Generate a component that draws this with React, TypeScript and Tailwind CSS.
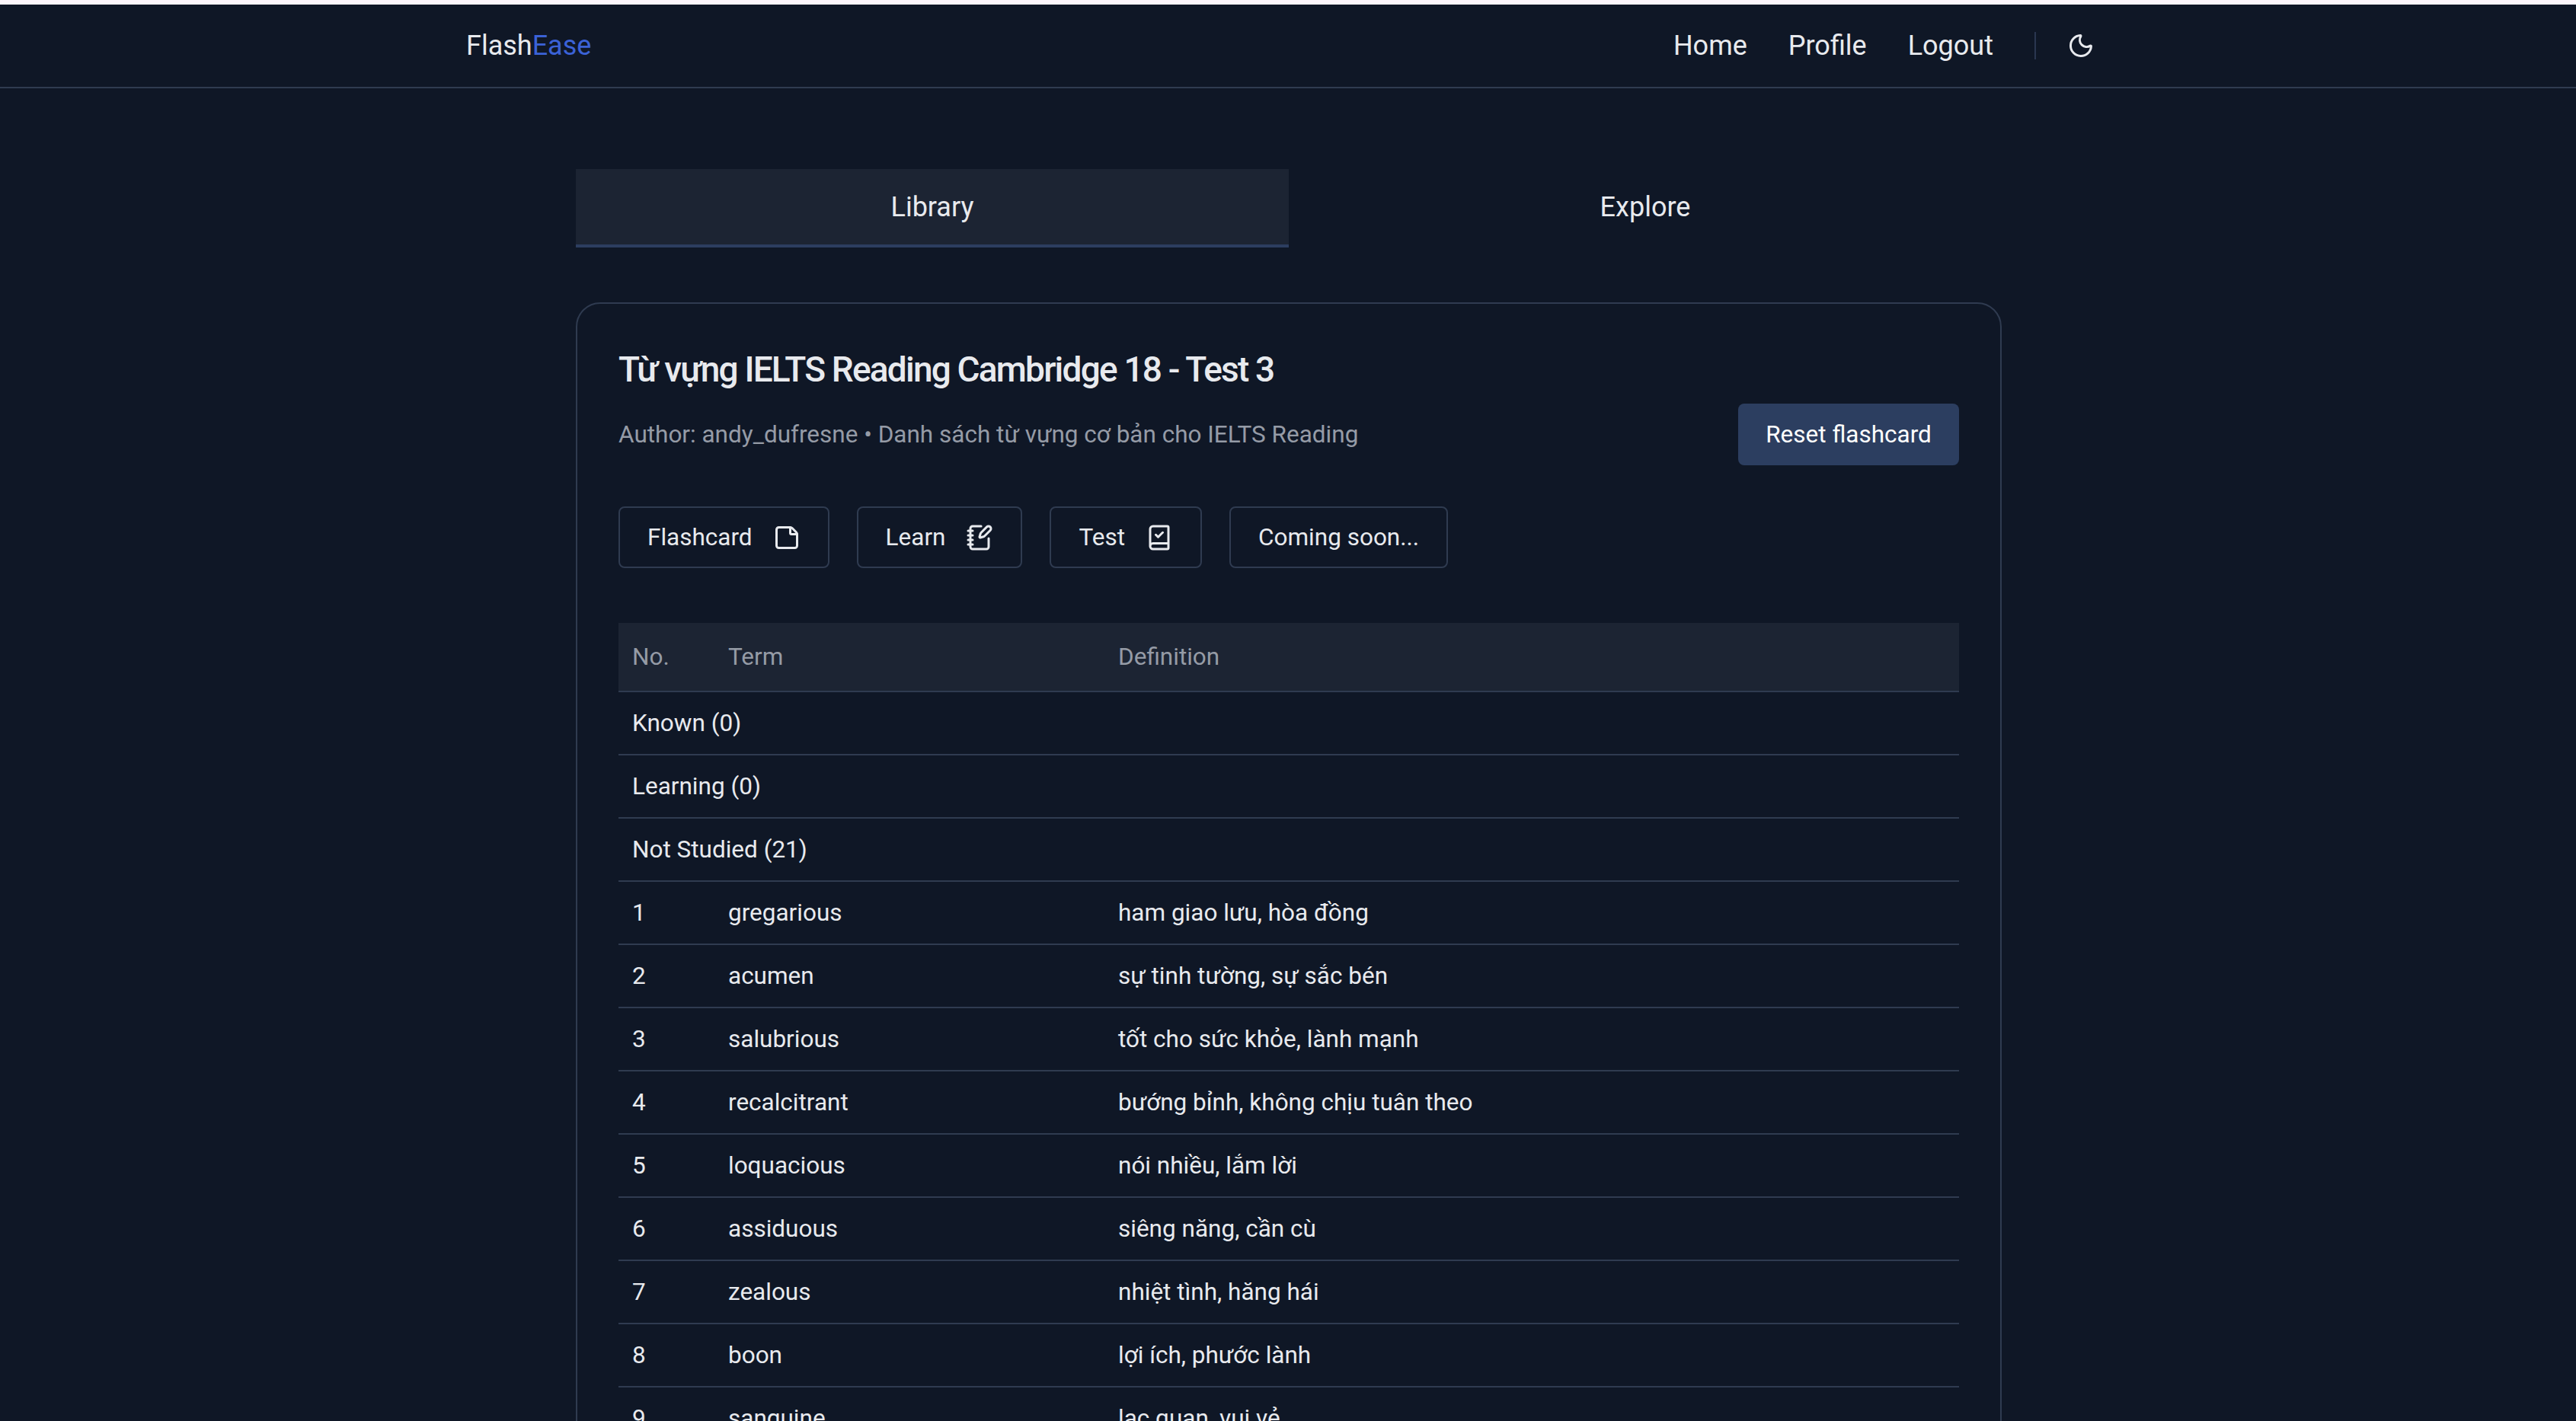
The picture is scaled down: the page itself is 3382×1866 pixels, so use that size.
import { Moon, StickyNote, NotebookPen, BookCheck } from 'lucide-react';

const words = [
  { term: 'gregarious', definition: 'ham giao lưu, hòa đồng' },
  { term: 'acumen', definition: 'sự tinh tường, sự sắc bén' },
  { term: 'salubrious', definition: 'tốt cho sức khỏe, lành mạnh' },
  { term: 'recalcitrant', definition: 'bướng bỉnh, không chịu tuân theo' },
  { term: 'loquacious', definition: 'nói nhiều, lắm lời' },
  { term: 'assiduous', definition: 'siêng năng, cần cù' },
  { term: 'zealous', definition: 'nhiệt tình, hăng hái' },
  { term: 'boon', definition: 'lợi ích, phước lành' },
  { term: 'sanguine', definition: 'lạc quan, vui vẻ' },
];

const groups = ['Known (0)', 'Learning (0)', 'Not Studied (21)'];

const modes = [
  { label: 'Flashcard', icon: StickyNote },
  { label: 'Learn', icon: NotebookPen },
  { label: 'Test', icon: BookCheck },
  { label: 'Coming soon...', icon: null },
];

export default function App() {
  return (
    <div className="h-screen overflow-hidden bg-[#0f1726] font-['Roboto',sans-serif] text-[#e8eaee]">
      <div className="h-[6px] bg-[#fdf6fb]" />
      <header className="h-[110px] border-b-2 border-[#2f3b50]">
        <div className="mx-auto flex h-full w-[2164px] items-center justify-between pl-[3px] pr-[23px]">
          <div className="text-[36px]">
            Flash<span className="text-[#3b62d6]">Ease</span>
          </div>
          <nav className="flex items-center text-[36px]">
            <a className="mr-[54px]">Home</a>
            <a className="mr-[54px]">Profile</a>
            <a>Logout</a>
            <div className="ml-[54px] h-[36px] w-[2px] bg-[#2a3650]" />
            <Moon className="ml-[41px] h-[36px] w-[36px]" strokeWidth={2} />
          </nav>
        </div>
      </header>

      <main className="ml-[756px] w-[1872px] pt-[106px]">
        <div className="grid grid-cols-2 text-[36px]">
          <div className="flex h-[103px] items-center justify-center border-b-4 border-[#2c3e60] bg-[#1c2433]">
            Library
          </div>
          <div className="flex h-[103px] items-center justify-center border-b-4 border-transparent">Explore</div>
        </div>

        <section className="mt-[72px] rounded-[32px] border-2 border-[#2f3b50] px-[54px] pb-[60px] pt-[54px]">
          <h1 className="text-[46px] font-medium leading-[64px] tracking-[-1.8px]">
            Từ vựng IELTS Reading Cambridge 18 - Test 3
          </h1>
          <div className="mt-[13px] flex items-center justify-between">
            <p className="text-[31.5px] text-[#959ba6]">Author: andy_dufresne • Danh sách từ vựng cơ bản cho IELTS Reading</p>
            <button className="h-[81px] w-[290px] rounded-[8px] bg-[#2c3e60] text-[31.5px] text-white">
              Reset flashcard
            </button>
          </div>

          <div className="mt-[54px] flex gap-[36px]">
            {modes.map((mode) => {
              const Icon = mode.icon;
              return (
                <button
                  key={mode.label}
                  className="flex h-[81px] items-center gap-[27px] rounded-[8px] border-2 border-[#2f3b50] px-[36px] text-[31.5px]"
                >
                  {mode.label}
                  {Icon && <Icon className="h-[36px] w-[36px]" strokeWidth={2} />}
                </button>
              );
            })}
          </div>

          <table className="mt-[72px] w-full table-fixed border-collapse text-left text-[31.5px]">
            <colgroup>
              <col className="w-[126px]" />
              <col className="w-[512px]" />
              <col />
            </colgroup>
            <thead>
              <tr className="h-[90px] border-b-2 border-[#2f3b50] bg-[#1c2433] text-[#959ba6]">
                <th className="pl-[18px] font-normal">No.</th>
                <th className="pl-[18px] font-normal">Term</th>
                <th className="pl-[18px] font-normal">Definition</th>
              </tr>
            </thead>
            <tbody>
              {groups.map((group) => (
                <tr key={group} className="h-[83px] border-b-2 border-[#2f3b50]">
                  <td colSpan={3} className="pl-[18px]">{group}</td>
                </tr>
              ))}
              {words.map((word, index) => (
                <tr key={word.term} className="h-[83px] border-b-2 border-[#2f3b50]">
                  <td className="pl-[18px]">{index + 1}</td>
                  <td className="pl-[18px]">{word.term}</td>
                  <td className="pl-[18px]">{word.definition}</td>
                </tr>
              ))}
            </tbody>
          </table>
        </section>
      </main>
    </div>
  );
}
